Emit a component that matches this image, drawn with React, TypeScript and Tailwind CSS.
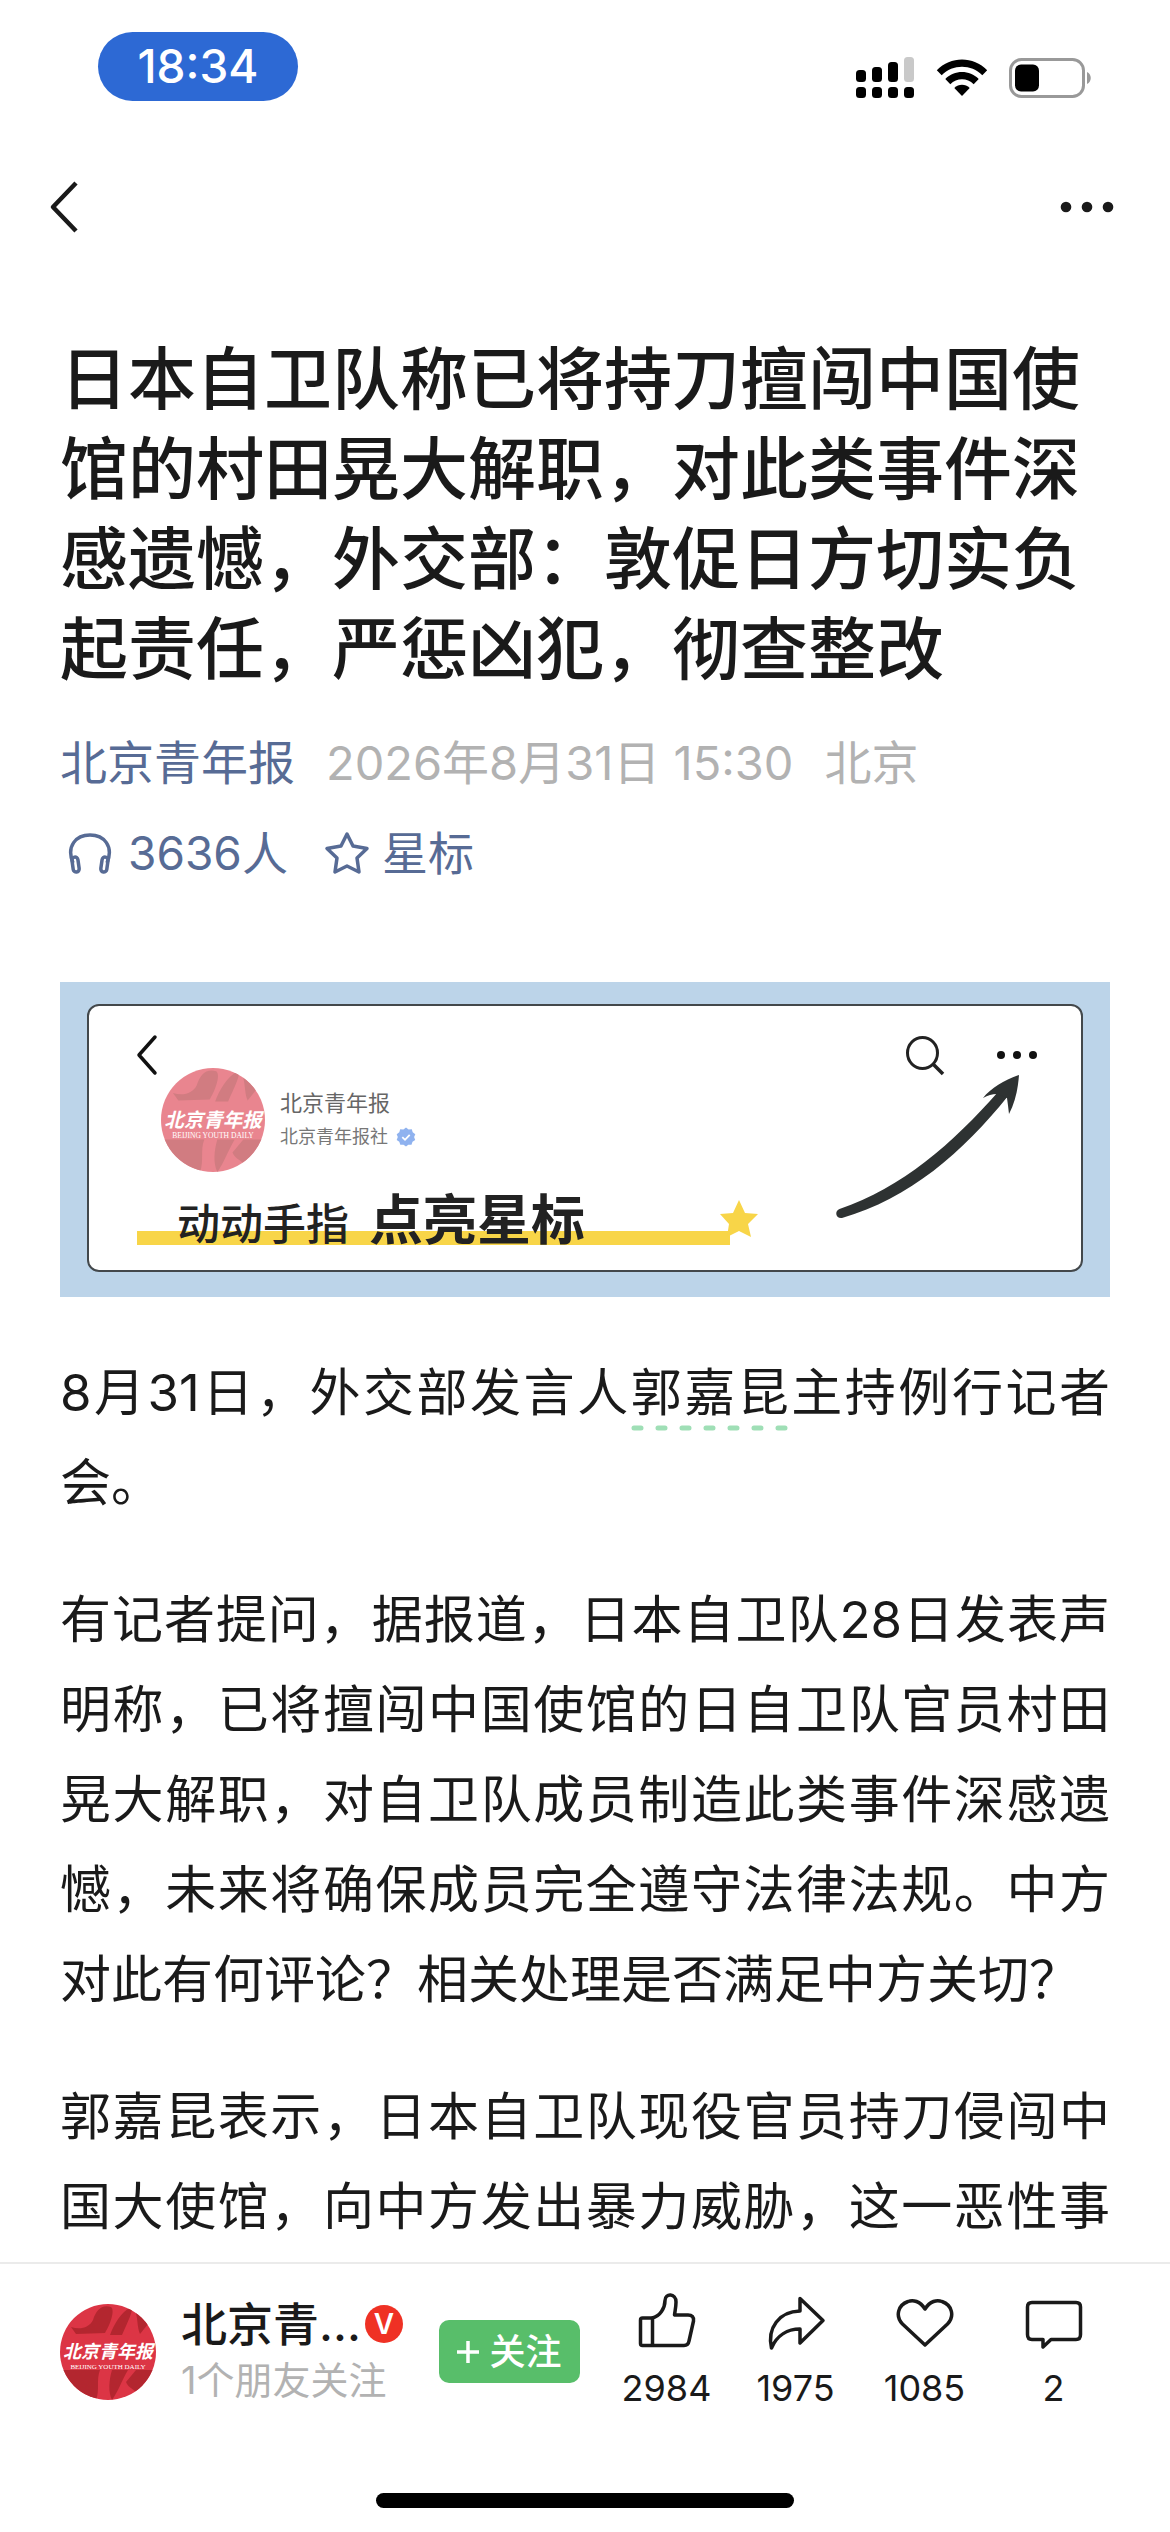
import React, { useState } from 'react';

const stats = [
  { key: 'like', label: '点赞', count: 2984 },
  { key: 'share', label: '转发', count: 1975 },
  { key: 'heart', label: '喜欢', count: 1085 },
  { key: 'comment', label: '评论', count: 2 },
];

const StatusBar: React.FC = () => (
  <div className="flex items-start justify-between pt-8 pl-[98px] pr-[78px]">
    <div className="flex items-center justify-center w-[200px] h-[69px] rounded-full bg-[#2d69d4] text-white text-[46px] font-medium">
      18:34
    </div>
    <div className="flex items-center h-[92px]">
      <svg width="58" height="42" viewBox="0 0 58 42" aria-hidden="true">
        <rect x="0" y="13" width="10" height="12" rx="3.5" />
        <rect x="16" y="10" width="10" height="15" rx="3.5" />
        <rect x="32" y="5" width="10" height="20" rx="3.5" />
        <rect x="48" y="0" width="10" height="25" rx="3.5" fill="#c9c9c9" />
        <rect x="0" y="30" width="10" height="11" rx="3.5" />
        <rect x="16" y="30" width="10" height="11" rx="3.5" />
        <rect x="32" y="30" width="10" height="11" rx="3.5" />
        <rect x="48" y="30" width="10" height="11" rx="3.5" />
      </svg>
      <svg className="ml-[22px]" width="52" height="38" viewBox="0 0 52 38" aria-hidden="true">
        <path d="M0.8 11.2C14.6-3 37.4-3 51.2 11.2L46.3 16.2C35.2 5 16.8 5 5.7 16.2Z" />
        <path d="M9.3 20C18.4 10.7 33.6 10.7 42.7 20L37.7 25.2C31.3 18.6 20.7 18.6 14.3 25.2Z" />
        <path d="M18.3 29C22.7 24.7 29.3 24.7 33.7 29L26 37Z" />
      </svg>
      <svg className="ml-[21px]" width="83" height="40" viewBox="0 0 83 40" aria-hidden="true">
        <rect x="1.5" y="1.5" width="73" height="37" rx="11" fill="none" stroke="#999" strokeWidth="3" />
        <rect x="6" y="6.5" width="24" height="27" rx="6" />
        <path d="M78 14c5 2 5 10 0 12z" fill="#999" />
      </svg>
    </div>
  </div>
);

const NavBar: React.FC = () => (
  <nav className="flex items-center justify-between pl-[48px] pr-[56px] h-[102px] mt-[32px]">
    <button aria-label="返回">
      <svg width="32" height="52" viewBox="0 0 32 52" fill="none" stroke="#1a1a1a" strokeWidth="4.5">
        <path d="M28 2L5 26L28 50" strokeLinejoin="round" />
      </svg>
    </button>
    <button aria-label="更多">
      <svg width="54" height="12" viewBox="0 0 54 12" fill="#1a1a1a">
        <circle cx="6" cy="6" r="5.3" />
        <circle cx="27" cy="6" r="5.3" />
        <circle cx="48" cy="6" r="5.3" />
      </svg>
    </button>
  </nav>
);

const Avatar: React.FC<{ className?: string; id: string }> = ({ className, id }) => (
  <svg className={className} viewBox="0 0 96 96" role="img" aria-label="北京青年报">
    <clipPath id={id}>
      <circle cx="48" cy="48" r="48" />
    </clipPath>
    <g clipPath={`url(#${id})`}>
      <rect width="96" height="96" fill="#dc3545" />
      <path d="M11 23C20 26 29 24 33 16C36 6 42 0 51 3C55 6 51 19 45 29L16 30Z" fill="#b3262f" />
      <path d="M50 31C54 20 61 8 71 3C74 6 68 17 62 31Z" fill="#b3262f" />
      <path d="M75 6L88 20L80 30C77 24 78 14 75 6Z" fill="#b3262f" />
      <path d="M0 66H40C36 76 40 86 36 96H22L0 84Z" fill="#b3262f" />
      <path d="M52 66H68C62 76 58 88 52 96C48 88 49 76 52 66Z" fill="#b3262f" />
      <path d="M76 66H96V82L80 92C76 86 68 84 66 78Z" fill="#b3262f" />
    </g>
    <text x="48" y="54" textAnchor="middle" fill="#fff" fontSize="18" fontStyle="italic" fontWeight="700" fontFamily="'Noto Sans CJK SC', sans-serif">
      北京青年报
    </text>
    <text x="48" y="65" textAnchor="middle" fill="#fff" fontSize="7" fontFamily="'Liberation Serif', serif">
      BEIJING YOUTH DAILY
    </text>
  </svg>
);

const Banner: React.FC = () => (
  <figure className="mt-[84px] bg-[#bcd4e9] pt-[22px] pb-[25px] px-[27px]">
    <div className="relative h-[268px] rounded-[12px] border-2 border-[#43484b] bg-white pl-[72px] pt-[62px]">
      <svg className="absolute left-[47px] top-[28px]" width="24" height="42" viewBox="0 0 24 42" fill="none" stroke="#111" strokeWidth="3.5">
        <path d="M19 3L3 21L19 39" strokeLinecap="round" strokeLinejoin="round" />
      </svg>
      <div className="flex items-center">
        <Avatar id="banner-logo" className="size-[104px] shrink-0 opacity-60" />
        <div className="ml-[15px] flex flex-col gap-[2px]">
          <span className="text-[22px] leading-[32px] text-[#666]">北京青年报</span>
          <span className="flex items-center gap-2 text-[18px] leading-[32px] text-[#777]">
            北京青年报社
            <svg width="20" height="20" viewBox="0 0 20 20" aria-hidden="true">
              <path d="M10 .5l2.6 1.9 3.2-.2 .9 3.1 2.6 1.9-1.2 2.9 1.1 3-2.7 1.7-1 3-3.2-.1L10 19.6l-2.5-1.9-3.2.1-1-3L.7 13.1l1.1-3L.7 7.2l2.6-1.9.9-3.1 3.2.2z" fill="#8fb2ef" />
              <path d="M6.3 10.2l2.7 2.6 4.7-5" fill="none" stroke="#fff" strokeWidth="1.8" />
            </svg>
          </span>
        </div>
      </div>
      <div className="absolute left-[48px] bottom-[25px] w-[593px] h-[14px] bg-[#f8d548]" />
      <figcaption className="absolute left-[88px] bottom-[12px] flex items-baseline gap-[20px] whitespace-nowrap text-[#222]">
        <span className="text-[43px] leading-[68px] font-medium">动动手指</span>
        <span className="text-[54px] leading-[68px] font-bold">点亮星标</span>
      </figcaption>
      <svg className="absolute left-[630px] top-[194px]" width="40" height="38" viewBox="0 0 40 38" fill="#f8d548" aria-hidden="true">
        <path d="M20 0L26 13L39 14L29 24L32 37L20 31L8 37L10 24L1 14L14 13Z" />
      </svg>
      <svg className="absolute right-0 top-0" width="260" height="220" viewBox="0 0 260 220" aria-hidden="true">
        <g fill="none" stroke="#222" strokeWidth="3">
          <ellipse cx="101.5" cy="47" rx="15" ry="15.5" />
          <path d="M112 58L122 68" strokeWidth="3.5" />
        </g>
        <g fill="#111">
          <circle cx="180" cy="49" r="4" />
          <circle cx="196" cy="49" r="4" />
          <circle cx="212" cy="49" r="4" />
        </g>
        <g fill="#2e3232">
          <path d="M18.5 203C81 182 132 137 177 86L187 90C142 146 88 193 21 212C15 213 13 205 18.5 203Z" />
          <path d="M198 69C197 83 194 97 188 108Q187 99 186 92L177 88Q170 87.5 162 92C170 82 184 74 198 69Z" />
        </g>
      </svg>
    </div>
  </figure>
);

const StatIcon: React.FC<{ name: string }> = ({ name }) => (
  <svg width="60" height="60" viewBox="0 0 60 60" fill="none" stroke="#1a1a1a" strokeWidth="3.5" strokeLinejoin="round" strokeLinecap="round">
    {name === 'like' && (
      <>
        <path d="M5.5 27H15C23 25.5 28 17 28 9.5C28 2 39 2 39 11C39 16 38 20 37.5 24H51C55 24 57 26 56.5 30L52 50C51.5 53 50 54.5 47 54.5H5.5C4 54.5 3.5 54 3.5 52.5V29C3.5 27.5 4 27 5.5 27Z" />
        <path d="M15.5 27V54" />
      </>
    )}
    {name === 'share' && (
      <path d="M34 7.5L57 29.5L34 52V38C22 38 11 44 5.5 57C1 37 13 20.5 34 20Z" />
    )}
    {name === 'heart' && (
      <path d="M30 18C25 10 18 8.5 13 10.5C3 14 0 25 7.5 33L30 54L52.5 33C60 25 57 14 47 10.5C42 8.5 35 10 30 18Z" />
    )}
    {name === 'comment' && (
      <path d="M8 11.5H52Q56.5 11.5 56.5 16V43.5Q56.5 48.5 52 48.5H27L19 56V48.5H8Q3.5 48.5 3.5 43.5V16Q3.5 11.5 8 11.5Z" />
    )}
  </svg>
);

const Footer: React.FC = () => {
  const [followed, setFollowed] = useState<boolean>(false);

  return (
    <footer className="border-t-2 border-[#ebebeb] bg-white">
      <div className="flex items-start pl-[60px] pr-[52px] pt-[22px] h-[229px]">
        <Avatar id="footer-logo" className="mt-[18px] size-24 shrink-0" />
        <div className="ml-[25px] mt-[10px] w-[258px] shrink-0">
          <div className="flex items-center text-[46px] leading-[56px] font-medium text-[#1a1a1a]">
            北京青...
            <span className="ml-1 flex items-center justify-center size-[38px] rounded-full bg-[#ef3124] text-[28px] leading-none font-semibold text-white">
              V
            </span>
          </div>
          <div className="text-[38px] leading-[56px] text-[#b2b2b2]">1个朋友关注</div>
        </div>
        <button
          className="mt-[34px] shrink-0 flex items-center justify-center gap-[10px] w-[141px] h-[63px] rounded-[10px] bg-[#58be6a] text-white text-[36px] font-medium"
          aria-pressed={followed}
          onClick={() => setFollowed(!followed)}
        >
          <svg width="22" height="22" viewBox="0 0 22 22" stroke="#fff" strokeWidth="3.5" aria-hidden="true">
            <path d="M11 0V22M0 11H22" />
          </svg>
          关注
        </button>
        <div className="flex flex-1 ml-[22px]">
          {stats.map((s) => (
            <button key={s.key} aria-label={s.label} className="flex flex-1 flex-col items-center mt-[5px]">
              <StatIcon name={s.key} />
              <span className="mt-[15px] text-[36px] leading-[44px] text-[#1a1a1a]">{s.count}</span>
            </button>
          ))}
        </div>
      </div>
      <div className="mx-auto mb-6 w-[418px] h-[15px] rounded-full bg-black" />
    </footer>
  );
};

const App: React.FC = () => {
  return (
    <div className="flex flex-col min-h-screen bg-white text-[#1a1a1a] font-['Inter','Noto_Sans_CJK_SC',sans-serif]" lang="zh-CN">
      <StatusBar />
      <NavBar />
      <main className="flex-1 px-[60px] pt-[76px]">
        <h1 className="text-[68px] leading-[90px] font-medium">
          日本自卫队称已将持刀擅闯中国使馆的村田晃大解职，对此类事件深感遗憾，外交部：敦促日方切实负起责任，严惩凶犯，彻查整改
        </h1>
        <div className="mt-[24px] flex items-center gap-[31px] text-[47px] leading-[90px] text-[#b2b2b2]">
          <a href="#account" className="text-[#576b95]">北京青年报</a>
          <span>2026年8月31日 15:30</span>
          <span>北京</span>
        </div>
        <div className="flex items-center gap-[36px] pl-2 text-[46px] leading-[90px] text-[#576b95]">
          <button className="flex items-center gap-4">
            <svg width="44" height="44" viewBox="0 0 44 44" fill="none" stroke="currentColor" strokeWidth="3.5">
              <path d="M5 32C-2 15 8 4 22 4C36 4 46 15 39 32" />
              <rect x="4.5" y="26" width="6" height="15" rx="3" transform="rotate(-8 8 33)" />
              <rect x="33.5" y="26" width="6" height="15" rx="3" transform="rotate(8 36 33)" />
            </svg>
            3636人
          </button>
          <button className="flex items-center gap-3">
            <svg width="46" height="44" viewBox="0 0 46 44" fill="none" stroke="currentColor" strokeWidth="3.5" strokeLinejoin="round">
              <path d="M23 3L29 15L43 17.5L33 27L35 41L23 35L11 41L13 27L3 17.5L17 15Z" />
            </svg>
            星标
          </button>
        </div>
        <Banner />
        <article className="mt-[51px] flex flex-col gap-[47px] pb-[10px] text-[51px] leading-[90px] text-justify">
          <p>
            8月31日，外交部发言人
            <a href="#guojiakun" className="relative">
              郭嘉昆
              <svg className="absolute left-0 -bottom-2 w-full h-[6px]" aria-hidden="true">
                <line x1="3" y1="3" x2="100%" y2="3" stroke="#9fdfb6" strokeWidth="5" strokeLinecap="round" strokeDasharray="7 17" />
              </svg>
            </a>
            主持例行记者会。
          </p>
          <p>
            有记者提问，据报道，日本自卫队28日发表声明称，已将擅闯中国使馆的日自卫队官员村田晃大解职，对自卫队成员制造此类事件深感遗憾，未来将确保成员完全遵守法律法规。中方对此有何评论？相关处理是否满足中方关切？
          </p>
          {/* last line runs on under the toolbar, so it is stretched as well */}
          <p className="[text-align-last:justify]">
            郭嘉昆表示，日本自卫队现役官员持刀侵闯中国大使馆，向中方发出暴力威胁，这一恶性事
          </p>
        </article>
      </main>
      <Footer />
    </div>
  );
};

export default App;
